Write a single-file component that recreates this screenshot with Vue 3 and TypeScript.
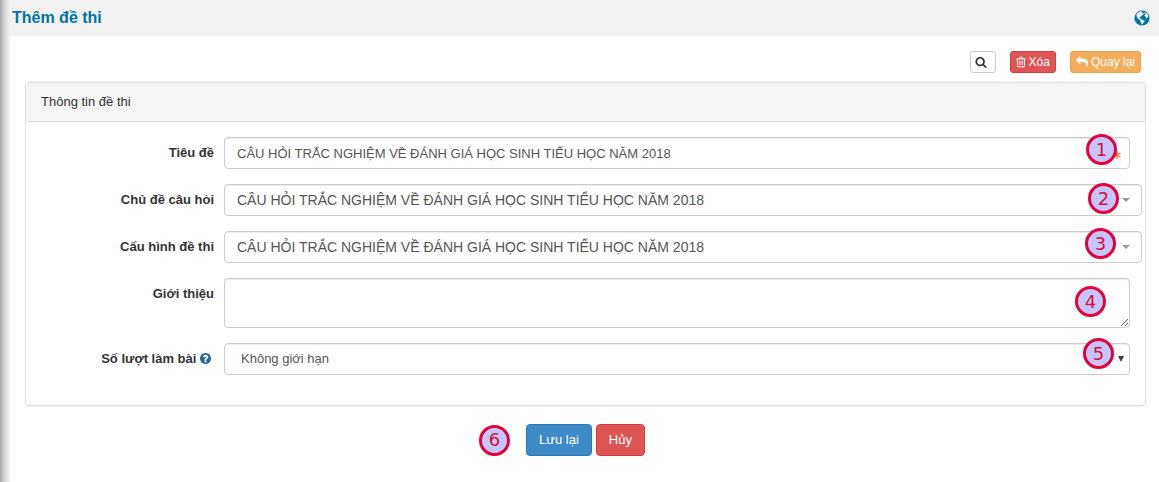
<script setup lang="ts">
import { ref } from 'vue'

const examName = 'CÂU HỎI TRẮC NGHIỆM VỀ ĐÁNH GIÁ HỌC SINH TIỂU HỌC NĂM 2018'
const title = ref(examName)
const topic = ref(examName)
const config = ref(examName)
const intro = ref('')
const attempts = ref('Không giới hạn')
</script>

<template>
  <div class="page">
    <header class="topbar">
      <h1>Thêm đề thi</h1>
      <a href="#" class="globe" aria-label="Ngôn ngữ">
        <svg viewBox="0 0 16 16" width="16" height="16">
          <circle cx="8" cy="8" r="7.6" fill="#0073a1" />
          <path fill="#f1f1f1" d="M2.4 4.6 3.6 3l1.6-1 2-.7 1.5.5-.9.8 1 .7.9-.4.3 1.2-1.3.4-.6 1.2-1.3.6-.5 1-1.1.1.3.9 1.1.3.5.8 1.8.3 1.7 1.1-.3 1.5-1.2.8-.7 1.2-.9.2-.5-2.1-.9-1.1.1-1.3-1.3-.7-1.7-1.6-.6-1.8zM10.2 1.9l2.1 1 1.7 2 .4 1.4-.8 1.2-.9.9-.9-.8-.3-1.2-1.1-.5.2-1 .9-.7-.9-.9z" />
        </svg>
      </a>
    </header>

    <main class="content">
      <div class="toolbar">
        <button type="button" class="btn small plain" aria-label="Tìm kiếm">
          <svg viewBox="0 0 1792 1792" width="12" height="12"><path d="M1216 832q0-185-131.5-316.5t-316.5-131.5-316.5 131.5-131.5 316.5 131.5 316.5 316.5 131.5 316.5-131.5 131.5-316.5zm512 832q0 52-38 90t-90 38q-54 0-90-38l-343-342q-179 124-399 124-143 0-273.5-55.5t-225-150-150-225-55.5-273.5 55.5-273.5 150-225 225-150 273.5-55.5 273.5 55.5 225 150 150 225 55.5 273.5q0 220-124 399l343 343q37 37 37 90z" /></svg>
        </button>
        <button type="button" class="btn small danger">
          <svg viewBox="192 0 1408 1792" width="10" height="12"><path d="M704 736v576q0 14-9 23t-23 9h-64q-14 0-23-9t-9-23v-576q0-14 9-23t23-9h64q14 0 23 9t9 23zm256 0v576q0 14-9 23t-23 9h-64q-14 0-23-9t-9-23v-576q0-14 9-23t23-9h64q14 0 23 9t9 23zm256 0v576q0 14-9 23t-23 9h-64q-14 0-23-9t-9-23v-576q0-14 9-23t23-9h64q14 0 23 9t9 23zm128 724v-948h-896v948q0 22 7 40.5t14.5 27 10.5 8.5h832q3 0 10.5-8.5t14.5-27 7-40.5zm-672-1076h448l-48-117q-7-9-17-11h-317q-10 2-17 11zm928 32v64q0 14-9 23t-23 9h-96v948q0 83-47 143.5t-113 60.5h-832q-66 0-113-58.5t-47-141.5v-952h-96q-14 0-23-9t-9-23v-64q0-14 9-23t23-9h309l70-167q15-37 54-63t79-26h320q40 0 79 26t54 63l70 167h309q14 0 23 9t9 23z" /></svg>
          Xóa
        </button>
        <button type="button" class="btn small warning">
          <svg viewBox="0 0 1792 1792" width="12" height="12"><path d="M1792 1120q0 166-127 451-3 7-10.5 24t-13.5 30-13 22q-12 17-28 17-15 0-23.5-10t-8.5-25q0-9 2.5-26.5t2.5-23.5q5-68 5-123 0-101-17.5-181t-48.5-138.5-80-101-105.5-69.5-133-42.5-154-21.5-175.5-6h-224v256q0 26-19 45t-45 19-45-19l-512-512q-19-19-19-45t19-45l512-512q19-19 45-19t45 19 19 45v256h224q713 0 875 403 53 134 53 333z" /></svg>
          Quay lại
        </button>
      </div>

      <form @submit.prevent>
        <section class="panel">
          <h2>Thông tin đề thi</h2>
          <div class="fields">
            <div class="row">
              <label for="title">Tiêu đề</label>
              <div class="control">
                <input id="title" v-model="title" type="text" class="field" required />
                <svg class="required" viewBox="0 0 8 8" width="8" height="8"><path d="M4 0v8M.5 2l7 4M.5 6l7-4" stroke="#f5782c" stroke-width="1.4" /></svg>
                <span class="marker m1">1</span>
              </div>
            </div>
            <div class="row">
              <label for="topic">Chủ đề câu hỏi</label>
              <div class="control wide">
                <select id="topic" v-model="topic" class="field large"><option>{{ examName }}</option></select>
                <svg class="caret" viewBox="0 0 8 4" width="8" height="4"><path d="M0 0h8L4 4z" fill="#999" /></svg>
                <span class="marker m2">2</span>
              </div>
            </div>
            <div class="row">
              <label for="config">Cấu hình đề thi</label>
              <div class="control wide">
                <select id="config" v-model="config" class="field large"><option>{{ examName }}</option></select>
                <svg class="caret" viewBox="0 0 8 4" width="8" height="4"><path d="M0 0h8L4 4z" fill="#999" /></svg>
                <span class="marker m3">3</span>
              </div>
            </div>
            <div class="row">
              <label for="intro">Giới thiệu</label>
              <div class="control">
                <textarea id="intro" v-model="intro" class="field"></textarea>
                <span class="marker m4">4</span>
              </div>
            </div>
            <div class="row">
              <label for="attempts">Số lượt làm bài
                <svg class="help" viewBox="128 128 1536 1536" width="11" height="11"><path d="M1024 1376v-192q0-14-9-23t-23-9h-192q-14 0-23 9t-9 23v192q0 14 9 23t23 9h192q14 0 23-9t9-23zm256-672q0-88-55.5-163t-138.5-116-170-41q-243 0-371 213-15 24 8 42l132 100q7 6 19 6 16 0 25-12 53-68 86-92 34-24 86-24 48 0 85.5 26t37.5 59q0 38-20 61t-68 45q-63 28-115.5 86.5t-52.5 125.5v36q0 14 9 23t23 9h192q14 0 23-9t9-23q0-19 21.5-49.5t54.5-49.5q32-18 49-28.5t46-35 44.5-48 28-60.5 12.5-81zm384 192q0 209-103 385.5t-279.5 279.5-385.5 103-385.5-103-279.5-279.5-103-385.5 103-385.5 279.5-279.5 385.5-103 385.5 103 279.5 279.5 103 385.5z" /></svg>
              </label>
              <div class="control">
                <select id="attempts" v-model="attempts" class="field indented"><option>Không giới hạn</option></select>
                <svg class="arrow" viewBox="0 0 6 6" width="6" height="6"><path d="M0 0h6L3 6z" fill="#444" /></svg>
                <span class="marker m5">5</span>
              </div>
            </div>
          </div>
        </section>

        <div class="actions">
          <span class="marker inline">6</span>
          <button type="submit" class="btn primary">Lưu lại</button>
          <button type="button" class="btn danger">Hủy</button>
        </div>
      </form>
    </main>
  </div>
</template>

<style>
body {
  margin: 0;
  background: #fff;
}
</style>

<style scoped>
* {
  box-sizing: border-box;
}
.page {
  min-height: 100vh;
  font: 13px/20px "Liberation Sans", Arial, sans-serif;
  color: #333;
  background: linear-gradient(to right, #a8a8a8, #c8c8c8 3px, #e6e6e6 7px, #f1f1f1 10px) left / 10px 100% no-repeat;
}
.topbar {
  display: flex;
  align-items: center;
  justify-content: space-between;
  height: 36px;
  margin-left: 10px;
  padding: 0 9px 0 2px;
  background: #f1f1f1;
}
h1 {
  margin: 0;
  font-size: 16px;
  line-height: 20px;
  color: #0073a1;
}
.globe {
  display: flex;
}
.content {
  padding: 15px 13px 0 25px;
}
.toolbar {
  display: flex;
  justify-content: flex-end;
  gap: 14px;
  padding-right: 5px;
  margin-bottom: 9px;
}
.btn {
  display: inline-flex;
  align-items: center;
  justify-content: center;
  height: 32px;
  padding: 0 12px;
  border: 1px solid;
  border-radius: 4px;
  font: inherit;
  color: #fff;
}
.btn svg {
  fill: currentColor;
}
.small {
  height: 22px;
  gap: 3px;
  padding: 0 5px;
  border-radius: 3px;
  font-size: 12px;
}
.plain {
  justify-content: flex-start;
  width: 26px;
  padding: 0 4px 1px;
  background: #fff;
  border-color: #ccc;
  color: #333;
}
.danger {
  background: #df5554;
  border-color: #d43f3f;
}
.warning {
  background: #f3ad5c;
  border-color: #f0a04a;
}
.primary {
  background: #3d8ac7;
  border-color: #2e7ab8;
}
.panel {
  border: 1px solid #ddd;
  border-radius: 4px;
  box-shadow: 0 1px 1px rgba(0, 0, 0, 0.05);
}
h2 {
  margin: 0;
  padding: 9px 15px;
  border-bottom: 1px solid #ddd;
  border-radius: 3px 3px 0 0;
  background: #f5f5f5;
  font-size: 13px;
  font-weight: 400;
  line-height: 20px;
}
.fields {
  display: grid;
  gap: 15px;
  padding: 15px 15px 30px;
}
.row {
  display: grid;
  grid-template-columns: 173px minmax(0, 1fr);
  column-gap: 10px;
}
label {
  padding-top: 6px;
  font-weight: 700;
  text-align: right;
}
.help {
  margin-right: 3px;
  vertical-align: -1px;
  fill: #236b8e;
}
.control {
  position: relative;
  display: flex;
}
.wide {
  margin-right: -12px;
}
.field {
  width: 100%;
  height: 32px;
  margin: 0;
  padding: 0 12px;
  border: 1px solid #ccc;
  border-radius: 4px;
  background: #fff;
  box-shadow: inset 0 1px 1px rgba(0, 0, 0, 0.075);
  font: inherit;
  color: #555;
  appearance: none;
}
textarea.field {
  height: 50px;
  resize: vertical;
}
.large {
  font-size: 14px;
}
.indented {
  padding-left: 16px;
}
.required,
.caret,
.arrow {
  position: absolute;
  top: 14px;
  pointer-events: none;
}
.required {
  right: 9px;
}
.caret {
  right: 12px;
}
.arrow {
  top: 13px;
  right: 6px;
}
.marker {
  position: absolute;
  display: flex;
  align-items: center;
  justify-content: center;
  width: 31px;
  height: 31px;
  border: 3px solid #e4003a;
  border-radius: 50%;
  background: #c6c6ff;
  font: 18px/20px "DejaVu Sans", sans-serif;
  color: #dc0a3c;
}
.m1 {
  top: -3px;
  right: 13px;
}
.m2 {
  top: -1px;
  right: 23px;
}
.m3 {
  top: -3px;
  right: 26px;
}
.m4 {
  top: 8px;
  right: 24px;
}
.m5 {
  top: -5px;
  right: 16px;
}
.actions {
  display: flex;
  align-items: center;
  justify-content: center;
  gap: 4px;
  padding: 18px 47px 20px 0;
}
.inline {
  position: static;
  margin-right: 12px;
}
</style>
